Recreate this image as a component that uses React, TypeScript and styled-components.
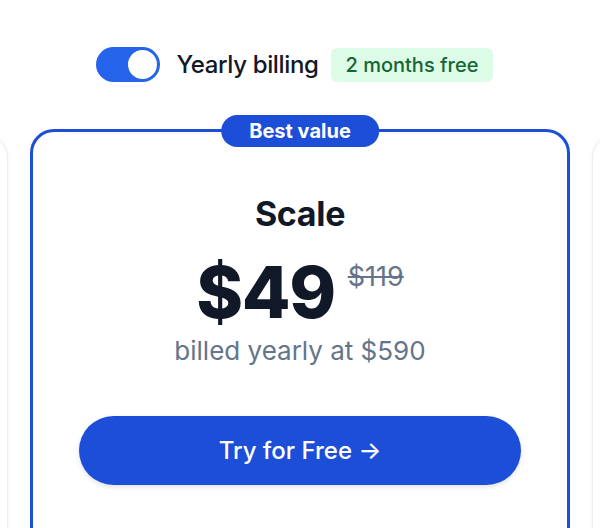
import React, { useState } from "react";
import styled, { createGlobalStyle } from "styled-components";

const GlobalStyle = createGlobalStyle`
  html, body {
    margin: 0;
    padding: 0;
    background: #ffffff;
  }
  body {
    font-family: Inter, "Noto Sans", "Liberation Sans", sans-serif;
    color: #111827;
    -webkit-font-smoothing: antialiased;
  }
`;

const Page = styled.div`
  width: 600px;
  height: 528px;
  overflow: hidden;
  padding-top: 47px;
  box-sizing: border-box;
`;

const BillingRow = styled.div`
  display: flex;
  align-items: center;
  justify-content: center;
  gap: 17px;
  height: 35px;
  padding-right: 11px;
`;

const Switch = styled.button<{ $on: boolean }>`
  position: relative;
  width: 64px;
  height: 35px;
  border: none;
  border-radius: 999px;
  padding: 0;
  background: ${(p) => (p.$on ? "#2563eb" : "#d1d5db")};
  cursor: pointer;
  flex-shrink: 0;
`;

const Knob = styled.span<{ $on: boolean }>`
  position: absolute;
  top: 3px;
  left: ${(p) => (p.$on ? "32px" : "3px")};
  width: 29px;
  height: 29px;
  border-radius: 50%;
  background: #ffffff;
  transition: left 0.2s;
`;

const BillingLabel = styled.span`
  font-size: 24px;
  font-weight: 500;
  color: #111827;
  letter-spacing: -0.015em;
`;

const FreeBadge = styled.span`
  margin-left: -5px;
  background: #dcfce7;
  color: #166534;
  font-size: 20px;
  font-weight: 500;
  padding: 0 15px;
  height: 34px;
  line-height: 34px;
  border-radius: 6px;
`;

const CardTrack = styled.div`
  display: flex;
  justify-content: center;
  gap: 22px;
  margin-top: 47px;
`;

const SideCard = styled.div`
  flex: 0 0 540px;
  height: 420px;
  box-sizing: border-box;
  margin-top: 5px;
  border: 1px solid #ececec;
  border-radius: 24px;
  background: #ffffff;
  box-shadow: 0 1px 4px rgba(0, 0, 0, 0.06);
`;

const FeaturedCard = styled.div`
  position: relative;
  flex: 0 0 540px;
  height: 440px;
  box-sizing: border-box;
  border: 3px solid #1d4ed8;
  border-radius: 24px;
  background: #ffffff;
  padding: 62px 46px 0;
  display: flex;
  flex-direction: column;
  align-items: center;
`;

const Ribbon = styled.div`
  position: absolute;
  top: -17px;
  left: 50%;
  transform: translateX(-50%);
  height: 32px;
  padding: 0 28px;
  line-height: 32px;
  border-radius: 999px;
  background: #1d4ed8;
  color: #ffffff;
  font-size: 20px;
  font-weight: 700;
  white-space: nowrap;
`;

const PlanName = styled.h2`
  margin: 0;
  font-size: 34px;
  line-height: 40px;
  font-weight: 700;
  color: #111827;
  letter-spacing: -0.01em;
`;

const PriceRow = styled.div`
  display: flex;
  align-items: flex-start;
  gap: 13px;
  margin-top: 22px;
`;

const Price = styled.span`
  font-size: 71px;
  line-height: 72px;
  font-weight: 800;
  color: #111827;
  letter-spacing: -0.02em;
`;

const OldPrice = styled.s`
  font-size: 27px;
  line-height: 27px;
  margin-top: 7px;
  color: #64748b;
  font-weight: 400;
`;

const BilledNote = styled.p`
  margin: 7px 0 0;
  font-size: 26px;
  line-height: 32px;
  color: #64748b;
`;

const CtaButton = styled.button`
  margin-top: 49px;
  width: 100%;
  height: 69px;
  border: none;
  border-radius: 999px;
  background: #1d4ed8;
  color: #ffffff;
  font-family: inherit;
  font-size: 24px;
  font-weight: 500;
  box-shadow: 0 2px 5px rgba(0, 0, 0, 0.12);
  cursor: pointer;
`;

const App = () => {
  const [yearly, setYearly] = useState(true);

  return (
    <Page>
      <GlobalStyle />
      <BillingRow>
        <Switch $on={yearly} onClick={() => setYearly(!yearly)} aria-label="Yearly billing">
          <Knob $on={yearly} />
        </Switch>
        <BillingLabel>Yearly billing</BillingLabel>
        <FreeBadge>2 months free</FreeBadge>
      </BillingRow>
      <CardTrack>
        <SideCard />
        <FeaturedCard>
          <Ribbon>Best value</Ribbon>
          <PlanName>Scale</PlanName>
          <PriceRow>
            <Price>{yearly ? "$49" : "$59"}</Price>
            <OldPrice>$119</OldPrice>
          </PriceRow>
          <BilledNote>billed yearly at $590</BilledNote>
          <CtaButton>Try for Free →</CtaButton>
        </FeaturedCard>
        <SideCard />
      </CardTrack>
    </Page>
  );
};

export default App;
